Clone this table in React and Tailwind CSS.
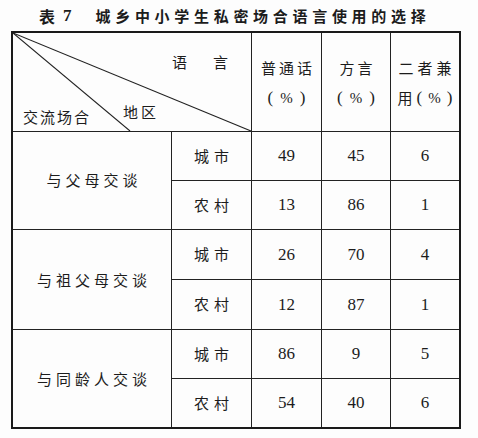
import React from "react";

const cjk = { fontFamily: '"Noto Sans CJK SC", "Noto Sans", sans-serif' };
const num = { fontFamily: '"Liberation Serif", "Noto Sans CJK SC", serif' };

const groups = [
  { label: "与父母交谈", rows: [["城市", "49", "45", "6"], ["农村", "13", "86", "1"]], h: ["h-[49px]", "h-[49px]"] },
  { label: "与祖父母交谈", rows: [["城市", "26", "70", "4"], ["农村", "12", "87", "1"]], h: ["h-[50px]", "h-[50px]"] },
  { label: "与同龄人交谈", rows: [["城市", "86", "9", "5"], ["农村", "54", "40", "6"]], h: ["h-[49px]", "h-[48px]"] },
];

function Pct({ gap = "gap-[7px]" }) {
  return (
    <span className={`flex items-center ${gap} text-[17px]`} style={num}>
      <span>(</span>
      <span className="text-[15px]">%</span>
      <span>)</span>
    </span>
  );
}

export default function App() {
  return (
    <div className="w-[478px] h-[438px] bg-[#fdfdfd] text-[#1c1c1c] overflow-hidden" style={cjk}>
      <div className="h-[31px] flex items-center pl-[39px] pt-[1px]">
        <span className="text-[16px] font-bold">表</span>
        <span className="text-[17px] font-bold ml-[8px]" style={num}>7</span>
        <span className="text-[15px] font-bold ml-[24px] tracking-[4.7px]">城乡中小学生私密场合语言使用的选择</span>
      </div>
      <div className="ml-[11px] w-[450px] border-2 border-[#1a1a1a]">
        <div className="grid grid-cols-[159px_80px_70px_69px_68px]">
          {/* Header diagonal cell */}
          <div className="col-span-2 relative h-[99px] border-r border-b border-[#222]">
            <svg className="absolute inset-0" width="239" height="98" viewBox="0 0 239 98">
              <line x1="0" y1="0" x2="117" y2="98" stroke="#222" strokeWidth="1.1" />
              <line x1="0" y1="0" x2="238" y2="98" stroke="#222" strokeWidth="1.1" />
            </svg>
            <span className="absolute left-[159px] top-[18px] text-[15px]">语<span className="inline-block w-[26px]"></span>言</span>
            <span className="absolute left-[110px] top-[68px] text-[15px] tracking-[3px]">地区</span>
            <span className="absolute left-[10px] top-[73px] text-[15px] tracking-[2px]">交流场合</span>
          </div>
          <div className="h-[99px] border-r border-b border-[#222] flex flex-col items-center pt-[20px] text-[15px] leading-[30px]">
            <span className="tracking-[3px] pl-[3px]">普通话</span>
            <Pct />
          </div>
          <div className="h-[99px] border-r border-b border-[#222] flex flex-col items-center pt-[20px] text-[15px] leading-[30px]">
            <span className="tracking-[3px] pl-[3px]">方言</span>
            <Pct />
          </div>
          <div className="h-[99px] border-b border-[#222] flex flex-col items-center pt-[20px] text-[15px] leading-[30px]">
            <span className="tracking-[4px] pl-[4px]">二者兼</span>
            <span className="flex items-center gap-[4px]">
              <span>用</span>
              <Pct gap="gap-[6px]" />
            </span>
          </div>

          {groups.map((g, gi) => (
            <React.Fragment key={gi}>
              <div className={`row-span-2 border-r ${gi < 2 ? "border-b" : ""} border-[#222] flex items-center justify-center text-[15px] tracking-[4px] pl-[4px] ${gi === 0 ? "pb-[1px]" : "pt-[1px]"}`}>
                {g.label}
              </div>
              {g.rows.map((r, ri) => {
                const last = gi === 2 && ri === 1;
                const bb = last ? "" : "border-b";
                return (
                  <React.Fragment key={ri}>
                    <div className={`${g.h[ri]} border-r ${bb} border-[#222] flex items-center justify-center text-[15px] tracking-[5px] pl-[5px]`}>{r[0]}</div>
                    <div className={`${g.h[ri]} border-r ${bb} border-[#222] flex items-center justify-center text-[17px]`} style={num}>{r[1]}</div>
                    <div className={`${g.h[ri]} border-r ${bb} border-[#222] flex items-center justify-center text-[17px]`} style={num}>{r[2]}</div>
                    <div className={`${g.h[ri]} ${bb} border-[#222] flex items-center justify-center text-[17px]`} style={num}>{r[3]}</div>
                  </React.Fragment>
                );
              })}
            </React.Fragment>
          ))}
        </div>
      </div>
    </div>
  );
}
